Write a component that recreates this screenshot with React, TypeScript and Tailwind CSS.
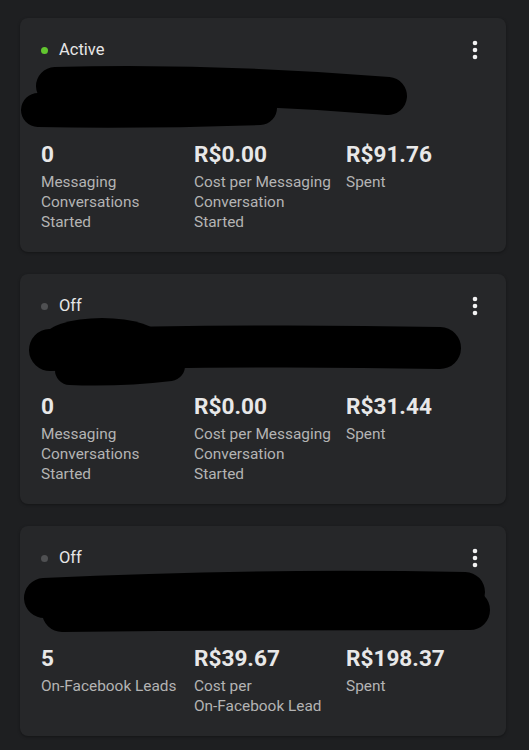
type Metric = { value: string; label: string[] };

type Ad = {
  active: boolean;
  titleH: number;
  blob: React.ReactNode;
  metrics: Metric[];
};

const ads: Ad[] = [
  {
    active: true,
    titleH: 82,
    blob: (
      <>
        <path d="M35 68 Q200 64 368 78" strokeWidth="38" />
        <path d="M18 92 Q120 94 240 90" strokeWidth="34" />
      </>
    ),
    metrics: [
      { value: "0", label: ["Messaging", "Conversations", "Started"] },
      { value: "R$0.00", label: ["Cost per Messaging", "Conversation", "Started"] },
      { value: "R$91.76", label: ["Spent"] },
    ],
  },
  {
    active: false,
    titleH: 78,
    blob: (
      <>
        <ellipse cx="82" cy="64" rx="58" ry="20" stroke="none" />
        <path d="M30 76 Q230 70 420 74" strokeWidth="42" />
        <path d="M50 96 Q100 98 150 92" strokeWidth="30" />
      </>
    ),
    metrics: [
      { value: "0", label: ["Messaging", "Conversations", "Started"] },
      { value: "R$0.00", label: ["Cost per Messaging", "Conversation", "Started"] },
      { value: "R$31.44", label: ["Spent"] },
    ],
  },
  {
    active: false,
    titleH: 78,
    blob: (
      <>
        <path d="M24 72 Q230 62 445 66" strokeWidth="40" />
        <path d="M42 86 Q250 84 450 84" strokeWidth="40" />
      </>
    ),
    metrics: [
      { value: "5", label: ["On-Facebook Leads"] },
      { value: "R$39.67", label: ["Cost per", "On-Facebook Lead"] },
      { value: "R$198.37", label: ["Spent"] },
    ],
  },
];

function Kebab() {
  return (
    <svg width="20" height="20" viewBox="0 0 20 20" className="text-[#f2f2f2]">
      <circle cx="10" cy="3" r="2.3" fill="currentColor" />
      <circle cx="10" cy="10" r="2.3" fill="currentColor" />
      <circle cx="10" cy="17" r="2.3" fill="currentColor" />
    </svg>
  );
}

function AdCard({ ad }: { ad: Ad }) {
  return (
    <div className="relative rounded-lg bg-[#262729] pt-[22px] pb-5 pl-[21px] pr-[21px] shadow-[0_1px_3px_rgba(0,0,0,0.35)]">
      <div className="flex h-5 items-center justify-between">
        <div className="flex items-center">
          <span
            className={
              ad.active
                ? "h-[7px] w-[7px] rounded-full bg-[#62c62f]"
                : "h-[7px] w-[7px] rounded-full bg-[#4f5052]"
            }
          />
          <span className="ml-[11px] text-[16.5px] text-[#e6e6e6]">{ad.active ? "Active" : "Off"}</span>
        </div>
        <Kebab />
      </div>

      <div style={{ height: ad.titleH }} />

      <div className="grid grid-cols-[153px_152px_1fr]">
        {ad.metrics.map((m, i) => (
          <div key={i}>
            <div className="text-[22.6px] font-bold leading-[26px] text-[#e8e8e8]">{m.value}</div>
            <div className="mt-1 text-[15.4px] leading-5 text-[#b4b4b4]">
              {m.label.map((l, j) => (
                <div key={j} className="whitespace-nowrap">{l}</div>
              ))}
            </div>
          </div>
        ))}
      </div>

      {/* redaction scribble */}
      <svg
        className="pointer-events-none absolute left-0 top-0"
        width="486"
        height="140"
        viewBox="0 0 486 140"
        fill="#000"
        stroke="#000"
        strokeLinecap="round"
      >
        <g fill="none">{ad.blob}</g>
        <g stroke="none">{ad.blob}</g>
      </svg>
    </div>
  );
}

export default function App() {
  return (
    <div
      className="min-h-[750px] w-[529px] bg-[#1e1f21] pt-[18px] pl-5 pr-[23px] pb-4"
      style={{ fontFamily: "Roboto, 'Liberation Sans', sans-serif" }}
    >
      <div className="flex flex-col gap-[22px]">
        {ads.map((ad, i) => (
          <AdCard key={i} ad={ad} />
        ))}
      </div>
    </div>
  );
}
